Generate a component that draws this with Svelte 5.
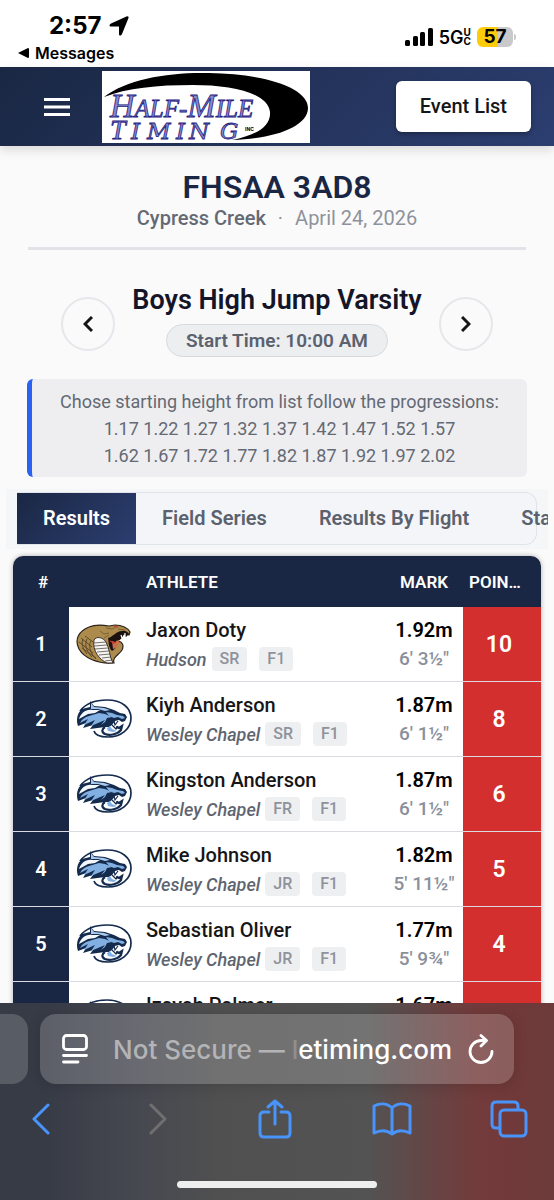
<script lang="ts">
	type Result = {
		place: number;
		name: string;
		school: string;
		grade: string;
		flight: string;
		mark: string;
		imperial: string;
		points: number;
	};

	const results: Result[] = [
		{ place: 1, name: 'Jaxon Doty', school: 'Hudson', grade: 'SR', flight: 'F1', mark: '1.92m', imperial: '6\' 3½"', points: 10 },
		{ place: 2, name: 'Kiyh Anderson', school: 'Wesley Chapel', grade: 'SR', flight: 'F1', mark: '1.87m', imperial: '6\' 1½"', points: 8 },
		{ place: 3, name: 'Kingston Anderson', school: 'Wesley Chapel', grade: 'FR', flight: 'F1', mark: '1.87m', imperial: '6\' 1½"', points: 6 },
		{ place: 4, name: 'Mike Johnson', school: 'Wesley Chapel', grade: 'JR', flight: 'F1', mark: '1.82m', imperial: '5\' 11½"', points: 5 },
		{ place: 5, name: 'Sebastian Oliver', school: 'Wesley Chapel', grade: 'JR', flight: 'F1', mark: '1.77m', imperial: '5\' 9¾"', points: 4 },
		{ place: 6, name: 'Izayah Palmer', school: 'Wesley Chapel', grade: 'JR', flight: 'F1', mark: '1.67m', imperial: '5\' 5¾"', points: 3 }
	];

	const tabs = ['Results', 'Field Series', 'Results By Flight', 'Standards'];
	let activeTab = $state('Results');
</script>

{#snippet cobra()}
	<svg class="team-logo" viewBox="0 0 56 40" role="img" aria-label="Hudson">
		<path d="M36 39C22 40 8 34 3 25C-2 15 3 7 13 3C20 0 27 1 33 2L39 1C46 1 52 4 54 8L53 11L48 9C46 13 44 15 42 17C47 18 48 22 46 26C43 31 36 33 38 39Z" fill="#ac8b4c" stroke="#2b241b" stroke-width="1.2" />
		<path d="M15 17C12 21 14 29 20 35M11 15C8 21 11 28 16 33M7 15C5 20 7 25 11 30M3 18L17 29M5 14L16 23M9 12L17 18M6 24L20 34" fill="none" stroke="#5e4a2b" />
		<path d="M18 16C20 12 27 13 30 18C34 25 33 32 37 39H31C24 36 16 27 18 16Z" fill="#f7f5f2" stroke="#3a332a" />
		<path d="M18 19L30 18M18 22L31 21M19 25L32 24M21 28L33 27M23 31L34 30M26 34L35 33M29 37L36 36" stroke="#55504a" stroke-width=".8" />
		<path d="M32 14C37 13 40 7 46 7C49 6 52 8 53 10L50 13L48 10L45 15L40 17C43 19 40 25 36 27C32 23 33 18 32 14Z" fill="#1b1210" />
		<path d="M36 17L39 18L43 16L43 19C42 22 39 25 37 25Z" fill="#c96f4c" />
		<path d="M34 17L38 19L40 18" fill="none" stroke="#dc3030" stroke-width="1.2" />
		<path d="M45 11L46 14M49 9L49 12" stroke="#fff" stroke-width="1.2" />
		<path d="M24 7L28 10L33 9M30 4L36 5L40 3M28 14L33 11M42 5L49 6" fill="none" stroke="#7a6236" />
		<path d="M38 2L42 3" stroke="#c44b3a" stroke-width="1.5" />
	</svg>
{/snippet}

{#snippet wildcat()}
	<svg class="team-logo" viewBox="0 0 56 40" role="img" aria-label="Wesley Chapel">
		<path d="M4 12C10 4 21 1 31 1C46 1 55 9 55 19C55 30 45 38 32 38C24 38 19 36 18 32" fill="none" stroke="#142b4e" stroke-width="1.7" />
		<path d="M14 2L18 7L29 8L38 11L44 14L49 15L51 18L49 22L46 23L43 21L39 22L36 26L33 28L29 28L14 30L17 26L7 29L10 24L2 27C0 21 1 14 6 10L14 8Z" fill="#142b4e" />
		<path d="M3 20C5 14 10 10 16 11L24 11L19 14L12 15Z" fill="#f4f8fc" />
		<path d="M4 24C6 20 9 18 13 17L23 14L29 15L36 18L31 19L29 23L25 26L29 21L15 27L19 21L8 26L12 20Z" fill="#82b0e2" />
		<path d="M30 13L36 14L41 16L47 17L49 19L46 20L42 18L38 19L33 17Z" fill="#82b0e2" />
		<path d="M15 4L18 8L28 9L34 11L29 12L22 10L15 10Z" fill="#a9caec" />
		<path d="M29 28C26 30 25 33 29 35C34 37 42 35 45 31L46 27L43 29L40 28" fill="none" stroke="#142b4e" stroke-width="2.2" />
		<path d="M34 27L36 30L41 32L37 33L32 32L31 29Z" fill="#82b0e2" />
		<path d="M38 22L39 26L42 22M36 26L40 30L42 27" fill="none" stroke="#142b4e" stroke-width="1.2" />
	</svg>
{/snippet}

<div class="page">
	<div class="status-bar">
		<div>
			<div class="clock">
				<span>2:57</span>
				<svg width="20" height="20" viewBox="0 0 20 20"><path d="M19.500 2L13 18C12 20 10 20 10 18V10.500H2C0 10.500 0 8.500 2 7.500L17.500 .5C19 0 20 1 19.500 2Z" /></svg>
			</div>
			<a class="back-link" href="#messages">
				<svg width="11" height="10" viewBox="0 0 11 10"><path d="M0 5L10 0Q11 0 11 1V9Q11 10 10 10Z" /></svg>
				Messages
			</a>
		</div>
		<div class="status-right">
			<svg width="28" height="18" viewBox="0 0 28 18">
				<rect x="0" y="12" width="5" height="6" rx="1.500" />
				<rect x="8" y="8" width="5" height="10" rx="1.500" />
				<rect x="15" y="4" width="5" height="14" rx="1.500" />
				<rect x="23" y="0" width="5" height="18" rx="1.500" />
			</svg>
			<span class="network">5G</span>
			<span class="band"><span>U</span><span>C</span></span>
			<span class="battery">57</span>
			<span class="battery-tip"></span>
		</div>
	</div>

	<header class="app-bar">
		<button class="menu-button" aria-label="Menu">
			<svg width="26" height="18" viewBox="0 0 26 18"><path d="M0 1.500H26M0 9H26M0 16.500H26" stroke="#fff" stroke-width="3" /></svg>
		</button>
		<svg class="brand" width="208" height="72" viewBox="0 0 208 72" role="img" aria-label="Half-Mile Timing Inc">
			<rect width="208" height="72" fill="#fff" />
			<path d="M2 26C25 8 67 1 107 2C164 3 206 17 206 37C206 56 171 68 130 69C155 64 169 55 168 41C166 22 130 14 91 14C55 14 25 17 2 26Z" fill="#000" />
			<g font-family="'Liberation Serif', serif" font-style="italic" fill="#8a88cc" stroke="#24207d" stroke-width=".8">
				<text x="8" y="46" font-size="34">H<tspan font-size="25">ALF-</tspan>M<tspan font-size="25">ILE</tspan></text>
				<text x="8" y="68" font-size="28">T</text>
				<text x="29 45 74 87 118" y="68" font-family="'DejaVu Serif', serif" font-size="23">IMING</text>
			</g>
			<text x="143" y="60" font-family="Inter, sans-serif" font-size="5" font-weight="700">INC</text>
		</svg>
		<button class="event-list">Event List</button>
	</header>

	<main>
		<section class="meet">
			<h1>FHSAA 3AD8</h1>
			<p><span class="venue">Cypress Creek</span><span>·</span><span>April 24, 2026</span></p>
		</section>

		<section class="event">
			<button class="round" aria-label="Previous event">
				<svg width="10" height="16" viewBox="0 0 10 16"><path d="M9 1L2 8L9 15" /></svg>
			</button>
			<div class="event-info">
				<h2>Boys High Jump Varsity</h2>
				<span class="start-time">Start Time: 10:00 AM</span>
			</div>
			<button class="round" aria-label="Next event">
				<svg width="10" height="16" viewBox="0 0 10 16"><path d="M1 1L8 8L1 15" /></svg>
			</button>
		</section>

		<p class="note">
			Chose starting height from list follow the progressions:<br />
			1.17 1.22 1.27 1.32 1.37 1.42 1.47 1.52 1.57<br />
			1.62 1.67 1.72 1.77 1.82 1.87 1.92 1.97 2.02
		</p>

		<div class="tab-strip">
			<div class="tabs" role="tablist">
				{#each tabs as tab}
					<button
						role="tab"
						class="tab"
						class:tab--active={activeTab === tab}
						aria-selected={activeTab === tab}
						onclick={() => (activeTab = tab)}
					>
						{tab}
					</button>
				{/each}
			</div>
		</div>

		<table>
			<thead>
				<tr>
					<th class="col-place">#</th>
					<th class="col-logo"></th>
					<th class="col-athlete">ATHLETE</th>
					<th class="col-mark">MARK</th>
					<th class="col-points">POIN…</th>
				</tr>
			</thead>
			<tbody>
				{#each results as r (r.place)}
					<tr>
						<td class="place">{r.place}</td>
						<td>
							{#if r.school === 'Hudson'}
								{@render cobra()}
							{:else}
								{@render wildcat()}
							{/if}
						</td>
						<td class="athlete">
							<div class="name">{r.name}</div>
							<div class="details">
								<em>{r.school}</em>
								<span class="chip">{r.grade}</span>
								<span class="chip chip--flight">{r.flight}</span>
							</div>
						</td>
						<td class="mark">
							<div class="metric">{r.mark}</div>
							<div class="imperial">{r.imperial}</div>
						</td>
						<td class="points">{r.points}</td>
					</tr>
				{/each}
			</tbody>
		</table>
	</main>

	<footer class="browser">
		<div class="address-row">
			<div class="other-tab"></div>
			<div class="address">
				<button aria-label="Page menu">
					<svg width="26" height="30" viewBox="0 0 26 30" stroke="#fff" fill="none" stroke-width="2.800" stroke-linecap="round">
						<rect x="1.500" y="1.500" width="23" height="14" rx="3" />
						<path d="M1.500 21.500H24.500M1.500 28H16" />
					</svg>
				</button>
				<a class="url" href="#address"><span>Not Secure — <i>l</i></span>etiming.com</a>
				<button aria-label="Reload">
					<svg width="26" height="30" viewBox="0 0 26 30" stroke="#fff" fill="none" stroke-width="2.800" stroke-linecap="round" stroke-linejoin="round">
						<path d="M18 6.500H13A11 11 0 1 0 24 17.500M13 1.500L18.500 6.500L13 12" />
					</svg>
				</button>
			</div>
		</div>
		<nav class="toolbar">
			<button aria-label="Back"><svg width="20" height="32" viewBox="0 0 20 32"><path d="M17 2L3 16L17 30" /></svg></button>
			<button class="disabled" aria-label="Forward" disabled><svg width="20" height="32" viewBox="0 0 20 32"><path d="M3 2L17 16L3 30" /></svg></button>
			<button aria-label="Share">
				<svg width="34" height="40" viewBox="0 0 34 40"><path d="M11 13H6Q2 13 2 17V34Q2 38 6 38H28Q32 38 32 34V17Q32 13 28 13H23M17 25V2M10 8L17 2L24 8" /></svg>
			</button>
			<button aria-label="Bookmarks">
				<svg width="40" height="34" viewBox="0 0 40 34"><path d="M20 6C15 1 8 1 2 4V31C8 28 15 28 20 32C25 28 32 28 38 31V4C32 1 25 1 20 6ZM20 6V32" /></svg>
			</button>
			<button aria-label="Tabs">
				<svg width="38" height="38" viewBox="0 0 38 38"><path d="M9 28H6Q2 28 2 24V6Q2 2 6 2H24Q28 2 28 6V9" /><rect x="10" y="10" width="26" height="26" rx="4" /></svg>
			</button>
		</nav>
		<div class="home-indicator"></div>
	</footer>
</div>

<style>
	:global(body) {
		margin: 0;
		background: #fafafb;
	}

	.page {
		display: flex;
		flex-direction: column;
		height: 100vh;
		font-family: Roboto, sans-serif;
		color: #161618;
	}

	main {
		flex: 1;
		min-height: 0;
		overflow: hidden;
	}

	button {
		font: inherit;
		padding: 0;
		border: 0;
		background: none;
		cursor: pointer;
	}

	svg {
		display: block;
	}

	.status-bar {
		display: flex;
		justify-content: space-between;
		height: 67px;
		padding: 0 38px 0 18px;
		background: #fff;
		color: #000;
		font-family: Inter, sans-serif;
	}

	.clock {
		display: flex;
		align-items: center;
		gap: 8px;
		padding: 11px 0 0 31px;
		font-size: 24px;
		line-height: 30px;
		font-weight: 700;
	}

	.back-link {
		display: flex;
		align-items: center;
		gap: 6px;
		color: inherit;
		font-size: 16px;
		line-height: 24px;
		font-weight: 600;
		text-decoration: none;
	}

	.status-right {
		display: flex;
		align-items: center;
		height: 74px;
		font-weight: 700;
	}

	.network {
		margin-left: 6px;
		font-size: 18px;
		font-weight: 600;
	}

	.band {
		display: flex;
		flex-direction: column;
		font-size: 10px;
		line-height: 9px;
	}

	.battery {
		width: 36px;
		margin-left: 6px;
		font-size: 19px;
		line-height: 20px;
		text-align: center;
		border-radius: 6px;
		background: linear-gradient(90deg, #fccc0a 57%, #c9c9cc 57%);
	}

	.battery-tip {
		width: 2px;
		height: 6px;
		margin-left: 1px;
		border-radius: 0 2px 2px 0;
		background: #c9c9cc;
	}

	.app-bar {
		position: relative;
		display: flex;
		align-items: center;
		height: 79px;
		padding: 0 23px 0 44px;
		background: linear-gradient(135deg, #1a2744, #2c3e70);
		box-shadow: 0 4px 10px rgba(0, 0, 0, 0.13);
	}

	.brand {
		margin-left: 32px;
	}

	.event-list {
		margin-left: auto;
		padding: 0 24px;
		font-size: 20px;
		line-height: 51px;
		font-weight: 500;
		color: #161618;
		border-radius: 6px;
		background: #fff;
		box-shadow: 0 2px 4px rgba(0, 0, 0, 0.3);
	}

	.meet {
		margin: 0 28px;
		padding: 22px 0 17px;
		text-align: center;
		border-bottom: 3px solid #e1e3e8;
	}

	h1 {
		margin: 0;
		font-size: 32px;
		line-height: 38px;
		font-weight: 600;
		color: #1a2744;
	}

	.meet p {
		display: flex;
		justify-content: center;
		gap: 12px;
		margin: 0;
		font-size: 20px;
		line-height: 24px;
		color: #8e929b;
	}

	.meet .venue {
		font-weight: 500;
		color: #646973;
	}

	.event {
		display: flex;
		justify-content: center;
		align-items: flex-end;
		gap: 17px;
		margin-top: 34px;
	}

	.round {
		display: flex;
		align-items: center;
		justify-content: center;
		width: 54px;
		height: 54px;
		margin-bottom: 6px;
		border: 2px solid #e5e7eb;
		border-radius: 50%;
	}

	.round svg {
		fill: none;
		stroke: #161618;
		stroke-width: 3;
	}

	.event-info {
		display: flex;
		flex-direction: column;
		align-items: center;
		gap: 8px;
	}

	h2 {
		margin: 0;
		font-size: 27px;
		line-height: 32px;
		font-weight: 600;
		color: #151528;
	}

	.start-time {
		padding: 0 19px;
		font-size: 19px;
		line-height: 31px;
		font-weight: 600;
		color: #5b626e;
		border: 1px solid #d7dadd;
		border-radius: 17px;
		background: #eceef0;
	}

	.note {
		margin: 22px 27px 12px;
		padding: 9px 0 8px;
		font-size: 18px;
		line-height: 27px;
		text-align: center;
		color: #646973;
		border-left: 5px solid #2962f0;
		border-radius: 6px;
		background: #eeeef1;
	}

	.tab-strip {
		margin: 0 6px;
		padding: 3px 11px 4px;
		overflow: hidden;
		background: #f5f6f8;
	}

	.tabs {
		display: flex;
		border: 1px solid #e0e3ea;
		border-left: 0;
		border-radius: 0 12px 12px 0;
		background: #f4f5f8;
	}

	.tab {
		flex: none;
		padding: 0 26px;
		font-size: 20px;
		line-height: 51px;
		font-weight: 600;
		color: #5b626e;
		white-space: nowrap;
	}

	.tab--active {
		color: #fff;
		background: linear-gradient(135deg, #1a2744, #2c3e70);
	}

	table {
		width: calc(100% - 26px);
		margin: 7px 13px 0;
		table-layout: fixed;
		border-collapse: separate;
		border-spacing: 0;
		border-radius: 10px;
		overflow: hidden;
		background: #fff;
		box-shadow: 0 0 5px rgba(0, 0, 0, 0.3);
	}

	th {
		height: 51px;
		padding: 0;
		font-size: 17px;
		font-weight: 600;
		color: #fff;
		background: #1a2744;
	}

	.col-place {
		width: 56px;
		padding-left: 4px;
		box-sizing: border-box;
	}

	.col-logo {
		width: 70px;
	}

	.col-athlete {
		text-align: left;
		padding-left: 7px;
	}

	.col-mark {
		width: 78px;
	}

	.col-points {
		width: 78px;
		padding-left: 6px;
		box-sizing: border-box;
		text-align: left;
	}

	td {
		height: 74px;
		padding: 0;
		border-bottom: 1px solid #d9dbe0;
	}

	.place {
		font-size: 20px;
		font-weight: 600;
		text-align: center;
		color: #fff;
		background: #1a2744;
	}

	.team-logo {
		width: 56px;
		height: 40px;
		margin: 0 auto;
	}

	.athlete {
		padding-left: 7px;
	}

	.name {
		font-size: 20px;
		line-height: 30px;
		font-weight: 500;
		white-space: nowrap;
	}

	.details {
		display: flex;
		align-items: center;
		gap: 5px;
		height: 28px;
		font-size: 18px;
	}

	em {
		font-weight: 500;
		color: #5f6570;
		white-space: nowrap;
	}

	.chip {
		padding: 0 8px;
		font-size: 16px;
		line-height: 24px;
		font-weight: 500;
		color: #8e929b;
		border-radius: 4px;
		background: #eeeff1;
	}

	.chip--flight {
		margin-left: 7px;
	}

	.mark {
		text-align: center;
		white-space: nowrap;
	}

	.metric {
		font-size: 20px;
		line-height: 30px;
		font-weight: 600;
		color: #000;
	}

	.imperial {
		font-size: 19px;
		line-height: 28px;
		font-weight: 500;
		color: #8a909b;
	}

	.points {
		padding-right: 6px;
		font-size: 23px;
		font-weight: 600;
		text-align: center;
		color: #fff;
		background: #d32f2f;
	}

	.browser {
		position: relative;
		padding: 11px 0 12px;
		background: linear-gradient(90deg, #373b46 8%, #464850 24%, #505050 40%, #535353 66%, #733b3b 86%, #713939 92%, #6c3b3a);
	}

	.address-row {
		display: flex;
		gap: 12px;
		padding-right: 40px;
	}

	.other-tab {
		width: 28px;
		border-radius: 0 16px 16px 0;
		background: rgba(255, 255, 255, 0.17);
	}

	.address {
		flex: 1;
		display: flex;
		align-items: center;
		justify-content: space-between;
		height: 70px;
		padding: 0 20px 0 22px;
		border-radius: 16px;
		background: rgba(255, 255, 255, 0.19);
		box-shadow: 0 2px 14px rgba(0, 0, 0, 0.15);
	}

	.url {
		margin-left: auto;
		margin-right: 16px;
		font-family: Inter, sans-serif;
		font-size: 26px;
		font-weight: 500;
		color: #fff;
		text-decoration: none;
		white-space: nowrap;
	}

	.url span {
		color: #b4b4b6;
	}

	.url i {
		font-style: normal;
		color: #8f8f90;
	}

	.toolbar {
		display: flex;
		align-items: center;
		justify-content: space-between;
		height: 70px;
		padding: 0 25px 0 21px;
	}

	.toolbar button {
		display: flex;
		justify-content: center;
		width: 40px;
	}

	.toolbar svg {
		flex: none;
		fill: none;
		stroke: #4894fa;
		stroke-width: 3;
		stroke-linecap: round;
		stroke-linejoin: round;
	}

	.toolbar .disabled svg {
		stroke: #6f6f70;
	}

	.home-indicator {
		width: 36%;
		height: 7px;
		margin: 27px auto 0;
		border-radius: 4px;
		background: #eee;
	}
</style>
